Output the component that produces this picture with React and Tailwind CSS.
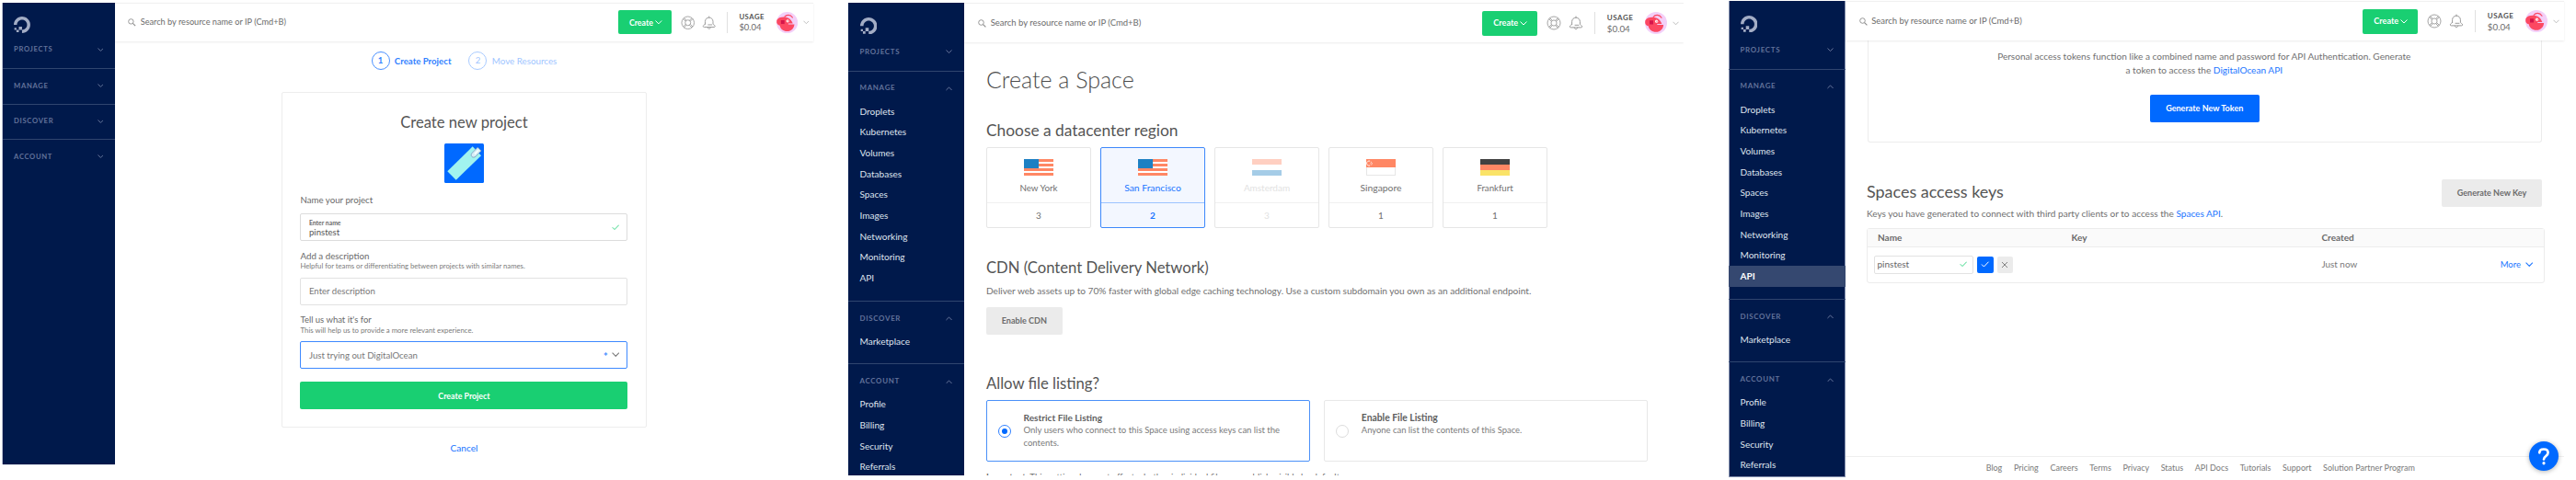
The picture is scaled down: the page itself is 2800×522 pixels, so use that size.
import { SiDigitalocean } from "react-icons/si";

function Chevron({ up = false, className = "" }) {
  return (
    <svg viewBox="0 0 8 5" className={`shrink-0 ${className}`} fill="none" stroke="currentColor" strokeLinecap="round" strokeLinejoin="round">
      <path d={up ? "M.8 4.2 4 1l3.2 3.2" : "M.8.8 4 4 7.2.8"} />
    </svg>
  );
}

function Check({ className = "" }) {
  return (
    <svg viewBox="0 0 9 7" className={`shrink-0 ${className}`} fill="none" stroke="currentColor" strokeLinecap="round" strokeLinejoin="round">
      <path d="M1 3.8 3.2 6 8 1" />
    </svg>
  );
}

function SearchIcon() {
  return (
    <svg viewBox="0 0 9 9" className="h-[9px] w-[9px] shrink-0" fill="none" stroke="#8a8a8a">
      <circle cx="3.5" cy="3.5" r="2.8" strokeWidth=".9" />
      <path d="M5.6 5.6 8.4 8.4" strokeWidth="1.1" />
    </svg>
  );
}

function Buoy() {
  return (
    <svg viewBox="0 0 16 16" className="h-[16px] w-[16px] shrink-0" fill="none" stroke="#9a9a9a" strokeWidth=".9">
      <circle cx="8" cy="8" r="7" />
      <circle cx="8" cy="8" r="3.1" />
      <path d="M3.6 2.6 6.3 5.3M2.6 3.6 5.3 6.3M12.4 2.6 9.7 5.3M13.4 3.6 10.7 6.3M3.6 13.4 6.3 10.7M2.6 12.4 5.3 9.7M12.4 13.4 9.7 10.7M13.4 12.4 10.7 9.7" />
    </svg>
  );
}

function Bell() {
  return (
    <svg viewBox="0 0 16 16" className="h-[16px] w-[16px] shrink-0" fill="none" stroke="#9a9a9a" strokeWidth="1" strokeLinecap="round" strokeLinejoin="round">
      <path d="M8 1v1.2M3.6 9.4V6.6C3.6 4 5.5 2.2 8 2.2s4.400 1.800 4.400 4.400v2.800c0 .8 2.300 1.200 2.300 2.500 0 .7-.5 1-1.200 1H2.500c-.7 0-1.200-.3-1.200-1 0-1.300 2.300-1.700 2.300-2.500zM6.300 13.200c.2 1 .8 1.500 1.700 1.500s1.500-.5 1.700-1.500M7 10.300h4" />
    </svg>
  );
}

function Avatar() {
  return (
    <svg viewBox="0 0 24 24" className="h-[24px] w-[24px] shrink-0">
      <circle cx="12" cy="12" r="12" fill="#f3cff8" />
      <path d="M.3 9.400C1.500 6.700 4.500 5.700 8 5.700c5 0 8.600 2.300 10.300 7.300h-5v1h6.800c-.3 4.600-3.600 7.800-8.100 7.800-4.400 0-7.600-2.600-8.300-6.500C1.800 15 .6 13.600.2 12z" fill="#fc4862" />
      <rect x="5" y="9.300" width="4" height="4.200" fill="#d5154b" />
      <circle cx="12.600" cy="10.200" r="1.600" fill="#fff" />
      <circle cx="13" cy="10.200" r=".6" fill="#fc4862" />
      <path d="M9.200 5.300C11 3 15.500 2.300 18 6.200" fill="none" stroke="#fc4862" strokeWidth="1.200" strokeLinecap="round" />
    </svg>
  );
}

const MANAGE = ["Droplets", "Kubernetes", "Volumes", "Databases", "Spaces", "Images", "Networking", "Monitoring", "API"];
const ACCOUNT = ["Profile", "Billing", "Security", "Referrals"];

function NavSection({ title, items = [], open = false, active }) {
  return (
    <div className={`border-t border-[#30456f] ${open ? "pb-[13px]" : "pb-[6.900px]"}`}>
      <div className="flex h-[32px] items-center justify-between pt-[5.500px] pr-[13px] pl-[12.500px]">
        <span className="text-[7.900px] font-bold tracking-[0.700px] text-[#62729a]">{title}</span>
        <Chevron up={open} className="h-[4.500px] w-[7px] text-[#7685a8]" />
      </div>
      {items.map((t) => (
        <div
          key={t}
          className={`h-[22.700px] pl-[12.500px] text-[10.050px] leading-[22.700px] ${t === active ? "bg-[#354870] font-bold text-white" : "text-[#dfe4ee]"}`}
        >
          {t}
        </div>
      ))}
    </div>
  );
}

function Sidebar({ open = false, active, className }) {
  return (
    <aside className={`shrink-0 overflow-hidden bg-[#00194b] ${className}`}>
      <div className="h-[41px] pt-[15.500px] pl-[12.500px]">
        <SiDigitalocean className="h-[18.500px] w-[18.500px] text-[#a3adc5]" />
      </div>
      <div className="flex h-[32.500px] items-start justify-between pt-[7px] pr-[13px] pl-[12.500px]">
        <span className="text-[7.900px] leading-[10px] font-bold tracking-[0.700px] text-[#62729a]">PROJECTS</span>
        <Chevron className="mt-[2.500px] h-[4.500px] w-[7px] text-[#7685a8]" />
      </div>
      <NavSection title="MANAGE" open={open} items={open ? MANAGE : []} active={active} />
      <NavSection title="DISCOVER" open={open} items={open ? ["Marketplace"] : []} />
      <NavSection title="ACCOUNT" open={open} items={open ? ACCOUNT : []} />
    </aside>
  );
}

function Header({ className }) {
  return (
    <header className={`flex h-[43px] shrink-0 items-center border-t border-[#f0f0f0] bg-white pl-[15px] shadow-[0_1px_2px_rgba(0,0,0,0.08)] ${className}`}>
      <SearchIcon />
      <span className="ml-[4.700px] text-[9.490px] text-[#6b6b6b]">Search by resource name or IP (Cmd+B)</span>
      <button className="ml-auto flex h-[27px] w-[59.500px] items-center rounded-[2px] bg-[#19cf72] pl-[12px] text-[9.100px] font-bold text-white">
        Create
        <Chevron className="ml-[2px] h-[5px] w-[8px]" />
      </button>
      <div className="ml-[10px]"><Buoy /></div>
      <div className="ml-[8px]"><Bell /></div>
      <div className="ml-[12px] h-[24px] w-px bg-[#e0e0e0]" />
      <div className="ml-[13px] w-[30px]">
        <div className="text-[8px] leading-[12px] font-bold tracking-[0.500px] text-[#555]">USAGE</div>
        <div className="text-[9.780px] leading-[12px] text-[#6b6b6b]">$0.04</div>
      </div>
      <div className="ml-[11.500px]"><Avatar /></div>
      <Chevron className="mr-[4.700px] ml-[6px] h-[5px] w-[7px] text-[#b5b5b5]" />
    </header>
  );
}

function ProjectIcon() {
  return (
    <svg viewBox="0 0 43 43" className="mx-auto mt-[13px] h-[43px] w-[43px]">
      <rect width="43" height="43" rx="1.500" fill="#0069ff" />
      <path d="M3.300 30.300 30.700 3.300 40 13.300 12.700 39.700z" fill="#a1f3ef" />
      <g transform="translate(34.300 10) rotate(45)" fill="none" stroke="#7d9cbd" strokeWidth=".8">
        <path d="M-2.700-5.500h5.400V3C2.700 5 1.500 6.200 0 6.200S-2.700 5-2.700 3z" fill="#d6eef6" />
        <path d="M0-4v6" stroke="#fff" strokeWidth="1.400" />
      </g>
    </svg>
  );
}

function CreateProject() {
  return (
    <section className="mt-[3px] ml-[3px] flex h-[502px] w-[881px] shrink-0">
      <Sidebar className="h-[518.600px] w-[126px] shadow-[-1px_0_0_#b9c1d2,0_1px_0_#dfe2ea] [zoom:0.968]" />
      <div className="w-[759px]">
        <Header className="w-[784px] [zoom:0.968]" />
        <div className="mt-[11.500px] flex h-[20px] items-center justify-center text-[#2f80ff]">
          <span className="flex h-[20px] w-[20px] items-center justify-center rounded-full border border-[#4a90ff] text-[9.500px] font-bold">1</span>
          <span className="ml-[5.300px] text-[9.660px] font-bold">Create Project</span>
          <span className="ml-[19px] flex h-[20px] w-[20px] items-center justify-center rounded-full border border-[#a9cbff] text-[9.500px] text-[#a0c5ff]">2</span>
          <span className="ml-[5.300px] text-[9.810px] text-[#a0c5ff]">Move Resources</span>
        </div>
        <div className="mx-auto mt-[24px] w-[397px] rounded-[2px] border border-[#ededed] px-[19.500px] pt-[22px] pb-[19px]">
          <h1 className="text-center text-[16.620px] leading-[20px] text-[#555]">Create new project</h1>
          <ProjectIcon />
          <div className="mt-[12px] text-[9.700px] leading-[12px] text-[#696969]">Name your project</div>
          <div className="mt-[9px] flex h-[30px] items-center justify-between rounded-[2px] border border-[#dcdcdc] pr-[8px] pl-[8.500px]">
            <div>
              <div className="text-[6.830px] leading-[10px] font-bold text-[#6b6b6b]">Enter name</div>
              <div className="text-[9.600px] leading-[11px] text-[#555]">pinstest</div>
            </div>
            <Check className="h-[6.500px] w-[8.500px] text-[#2fd480]" />
          </div>
          <div className="mt-[10px] text-[9.750px] leading-[12px] text-[#696969]">Add a description</div>
          <div className="text-[7.720px] leading-[11px] whitespace-nowrap text-[#7a7a7a]">Helpful for teams or differentiating between projects with similar names.</div>
          <div className="mt-[7px] flex h-[30px] items-center rounded-[2px] border border-[#e2e2e2] pl-[8.500px] text-[9.580px] text-[#777]">Enter description</div>
          <div className="mt-[10px] text-[9.490px] leading-[12px] text-[#696969]">Tell us what it's for</div>
          <div className="text-[7.840px] leading-[11px] text-[#7a7a7a]">This will help us to provide a more relevant experience.</div>
          <div className="mt-[6px] flex h-[30px] items-center rounded-[2px] border border-[#3d89ff] pr-[8px] pl-[8.500px] text-[9.640px] text-[#777]">
            Just trying out DigitalOcean
            <span className="mt-[4px] ml-auto text-[12px] leading-[12px] font-bold text-[#4a90ff]">*</span>
            <Chevron className="ml-[4px] h-[5.500px] w-[8.500px] text-[#777]" />
          </div>
          <button className="mt-[14px] flex h-[30px] w-full items-center justify-center rounded-[2px] bg-[#19cf72] text-[8.820px] font-bold text-white">Create Project</button>
        </div>
        <div className="mt-[16px] text-center text-[10.090px] leading-[12px] text-[#1673ff]">Cancel</div>
      </div>
    </section>
  );
}

function UsFlag() {
  return (
    <svg viewBox="0 0 32 18" className="h-[18px] w-[32px]">
      <rect width="32" height="18" fill="#fff" />
      <path d="M0 0h32v3H0zM0 5h32v3H0zM0 10h32v3H0zM0 15h32v3H0z" fill="#ff8764" />
      <rect width="16" height="10" fill="#1d80c3" />
    </svg>
  );
}

function NlFlag() {
  return (
    <svg viewBox="0 0 32 18" className="h-[18px] w-[32px]">
      <rect width="32" height="6" fill="#ffcfc1" />
      <rect y="12" width="32" height="6" fill="#a5cce7" />
    </svg>
  );
}

function SgFlag() {
  return (
    <svg viewBox="0 0 32 18" className="h-[18px] w-[32px]">
      <rect x=".5" y=".5" width="31" height="17" fill="#fff" stroke="#e6e6e6" />
      <rect width="32" height="9" fill="#ff8764" />
      <path d="M4.200 2.200a2.600 2.600 0 1 0 0 4.800" fill="none" stroke="#fff" strokeWidth=".9" />
      <path d="M5 3.300h.9M4.500 4.800h.9M6 4.800h.9M5.300 6h.9" stroke="#fff" strokeWidth=".8" />
    </svg>
  );
}

function DeFlag() {
  return (
    <svg viewBox="0 0 32 18" className="h-[18px] w-[32px]">
      <rect width="32" height="6" fill="#414141" />
      <rect y="6" width="32" height="6" fill="#ff8764" />
      <rect y="12" width="32" height="6" fill="#fae368" />
    </svg>
  );
}

const REGIONS = [
  { name: "New York", count: 3, Flag: UsFlag, size: "text-[9.770px]" },
  { name: "San Francisco", count: 2, Flag: UsFlag, size: "text-[10.340px]", selected: true },
  { name: "Amsterdam", count: 3, Flag: NlFlag, size: "text-[9.980px]", disabled: true },
  { name: "Singapore", count: 1, Flag: SgFlag, size: "text-[10.340px]" },
  { name: "Frankfurt", count: 1, Flag: DeFlag, size: "text-[9.650px]" },
];

function RegionCard({ name, count, Flag, size, selected, disabled }) {
  const box = selected ? "border-[#3d88fb] bg-[#f3f7ff] text-[#1a75ff]" : disabled ? "border-[#e6e6e6] text-[#e2e2e2]" : "border-[#e6e6e6] text-[#707070]";
  return (
    <div className={`flex h-[88px] w-[114px] flex-col rounded-[2px] border ${box}`}>
      <div className="flex h-[59px] flex-col items-center pt-[12px]">
        <Flag />
        <span className={`mt-[6px] leading-[14px] ${size}`}>{name}</span>
      </div>
      <div className={`flex flex-1 items-center justify-center border-t text-[10px] ${selected ? "border-[#9cc3ff] font-bold" : "border-[#f0f0f0]"}`}>{count}</div>
    </div>
  );
}

function ListingOption({ title, titleSize, checked, children, textSize }) {
  return (
    <div className={`flex h-[67.500px] w-[352px] rounded-[2px] border ${checked ? "border-[#4a90f8]" : "border-[#e8e8e8]"}`}>
      <span className={`mt-[26px] ml-[12px] flex h-[14px] w-[14px] shrink-0 items-center justify-center rounded-full border ${checked ? "border-[#2f80ff]" : "border-[#dcdcdc]"}`}>
        {checked && <span className="h-[6px] w-[6px] rounded-full bg-[#0069ff]" />}
      </span>
      <div className="ml-[13.500px] pt-[11px]">
        <div className={`leading-[14.300px] font-bold text-[#606060] ${titleSize}`}>{title}</div>
        <div className={`leading-[14.200px] text-[#7a7a7a] ${textSize}`}>{children}</div>
      </div>
    </div>
  );
}

function CreateSpace() {
  return (
    <section className="mt-[3px] ml-[38px] flex h-[514px] w-[908px] shrink-0 overflow-hidden">
      <Sidebar open className="h-[514px] w-[126px]" />
      <div className="flex w-[782px] flex-col">
        <Header className="w-[782px]" />
        <div className="pl-[24px]">
          <h1 className="mt-[25px] text-[25px] leading-[30px] font-light text-[#4c4c4c]">Create a Space</h1>
          <h2 className="mt-[31px] text-[17.350px] leading-[20px] text-[#555]">Choose a datacenter region</h2>
          <div className="mt-[8px] flex gap-[10px]">
            {REGIONS.map((r) => (
              <RegionCard key={r.name} {...r} />
            ))}
          </div>
          <h2 className="mt-[33px] text-[16.640px] leading-[20px] text-[#555]">CDN (Content Delivery Network)</h2>
          <p className="mt-[7.500px] text-[10.090px] leading-[14px] whitespace-nowrap text-[#707070]">
            Deliver web assets up to 70% faster with global edge caching technology. Use a custom subdomain you own as an additional endpoint.
          </p>
          <button className="mt-[11.500px] flex h-[30px] w-[82.700px] items-center justify-center rounded-[2px] bg-[#ebebeb] text-[9.090px] font-bold text-[#6b6b6b]">Enable CDN</button>
          <h2 className="mt-[43px] text-[16.680px] leading-[20px] text-[#555]">Allow file listing?</h2>
          <div className="mt-[7.500px] flex gap-[15.300px]">
            <ListingOption checked title="Restrict File Listing" titleSize="text-[10.120px]" textSize="text-[9.520px]">
              Only users who connect to this Space using access keys can list the
              <br />
              contents.
            </ListingOption>
            <ListingOption title="Enable File Listing" titleSize="text-[10.350px]" textSize="text-[9.440px]">
              Anyone can list the contents of this Space.
            </ListingOption>
          </div>
          <p className="mt-[10px] text-[9.600px] leading-[14px] whitespace-nowrap text-[#707070]">
            <b>Important:</b> This setting does not affect whether individual files are publicly visible by default
          </p>
        </div>
      </div>
    </section>
  );
}

const FOOTER = ["Blog", "Pricing", "Careers", "Terms", "Privacy", "Status", "API Docs", "Tutorials", "Support", "Solution Partner Program"];

function ApiKeys() {
  return (
    <section className="relative mt-[1px] ml-[49px] flex h-[517.500px] w-[908px] shrink-0">
      <Sidebar open active="API" className="h-[517.500px] w-[126.500px] shadow-[inset_1px_0_0_#8490ae,inset_-1px_0_0_#8490ae,inset_0_-1px_0_#8490ae]" />
      <div className="flex w-[781.500px] flex-col">
        <Header className="z-10 w-[781.500px]" />
        <div className="ml-[24px] flex h-[111px] w-[733.500px] flex-col items-center rounded-b-[3px] border border-t-0 border-[#ececec] pt-[10px] text-center text-[10.080px] leading-[14.500px] text-[#707070]">
          <p className="pr-px">
            Personal access tokens function like a combined name and password for API Authentication. Generate
            <br />a token to access the <a className="text-[#1a75ff]">DigitalOcean API</a>
          </p>
          <button className="mt-[20px] h-[30px] w-[118.500px] rounded-[2px] bg-[#0069ff] text-[9.060px] font-bold text-white">Generate New Token</button>
        </div>
        <div className="mt-[40px] ml-[23.500px] flex w-[734px] justify-between">
          <div>
            <h2 className="mt-[2.500px] text-[17.970px] leading-[20px] text-[#555]">Spaces access keys</h2>
            <p className="mt-[7.500px] text-[10.080px] leading-[14px] text-[#707070]">
              Keys you have generated to connect with third party clients or to access the <a className="text-[#1a75ff]">Spaces API</a>.
            </p>
          </div>
          <button className="h-[30px] w-[109px] rounded-[2px] bg-[#ebebeb] text-[9.030px] font-bold text-[#6b6b6b]">Generate New Key</button>
        </div>
        <div className="mt-[9px] ml-[23.500px] w-[737px] rounded-[3px] border border-[#ececec]">
          <div className="flex h-[20px] items-center border-b border-[#ececec] bg-[#fafafa] pl-[11px] text-[10.020px] font-bold text-[#6b6b6b]">
            <span className="w-[210.500px]">Name</span>
            <span className="w-[272px]">Key</span>
            <span>Created</span>
          </div>
          <div className="flex h-[37.500px] items-center pr-[12px] pl-[7px]">
            <div className="flex h-[19.500px] w-[108px] items-center justify-between rounded-[2px] border border-[#e2e2e2] pr-[6px] pl-[2.500px] text-[10px] text-[#666]">
              pinstest
              <Check className="mb-[2px] h-[6.500px] w-[8.500px] text-[#2fd480]" />
            </div>
            <span className="ml-[4px] flex h-[18px] w-[18px] items-center justify-center rounded-[2px] bg-[#0069ff]">
              <Check className="h-[7px] w-[9.500px] text-white" />
            </span>
            <span className="ml-[3.700px] flex h-[18px] w-[17.300px] items-center justify-center rounded-[2px] bg-[#ebebeb]">
              <svg viewBox="0 0 8 8" className="h-[8px] w-[8px]" stroke="#777" strokeWidth=".9"><path d="M1 1l6 6M7 1 1 7" /></svg>
            </span>
            <span className="ml-[335.500px] text-[9.880px] text-[#777]">Just now</span>
            <span className="ml-auto text-[9.500px] text-[#1a75ff]">More</span>
            <Chevron className="ml-[4.500px] h-[5.500px] w-[8.500px] text-[#1a75ff]" />
          </div>
        </div>
        <footer className="mt-auto flex h-[22.500px] shrink-0 justify-center gap-[12.600px] border-t border-[#efefef] pr-[9px] text-[9px] leading-[24px] text-[#7a7a7a]">
          {FOOTER.map((t) => (
            <span key={t}>{t}</span>
          ))}
        </footer>
      </div>
      <div className="absolute top-[479px] left-[870px] flex h-[32px] w-[32px] items-center justify-center rounded-full bg-[#0069ff] shadow-[0_1px_5px_rgba(0,0,0,0.3)]">
        <svg viewBox="0 0 32 32" className="h-[32px] w-[32px]" fill="none" stroke="#fff" strokeWidth="2.700" strokeLinecap="round">
          <path d="M11.300 12.300C11.300 9.800 13.200 8.500 15.900 8.500c2.900 0 4.700 1.500 4.700 3.800 0 3.700-4.600 3.600-4.600 7.200" />
          <path d="M16 23.700v.1" strokeWidth="3.200" />
        </svg>
      </div>
    </section>
  );
}

export default function App() {
  return (
    <div className="flex h-[522px] w-[2800px] overflow-hidden bg-white font-['Lato',sans-serif]">
      <CreateProject />
      <CreateSpace />
      <ApiKeys />
    </div>
  );
}
